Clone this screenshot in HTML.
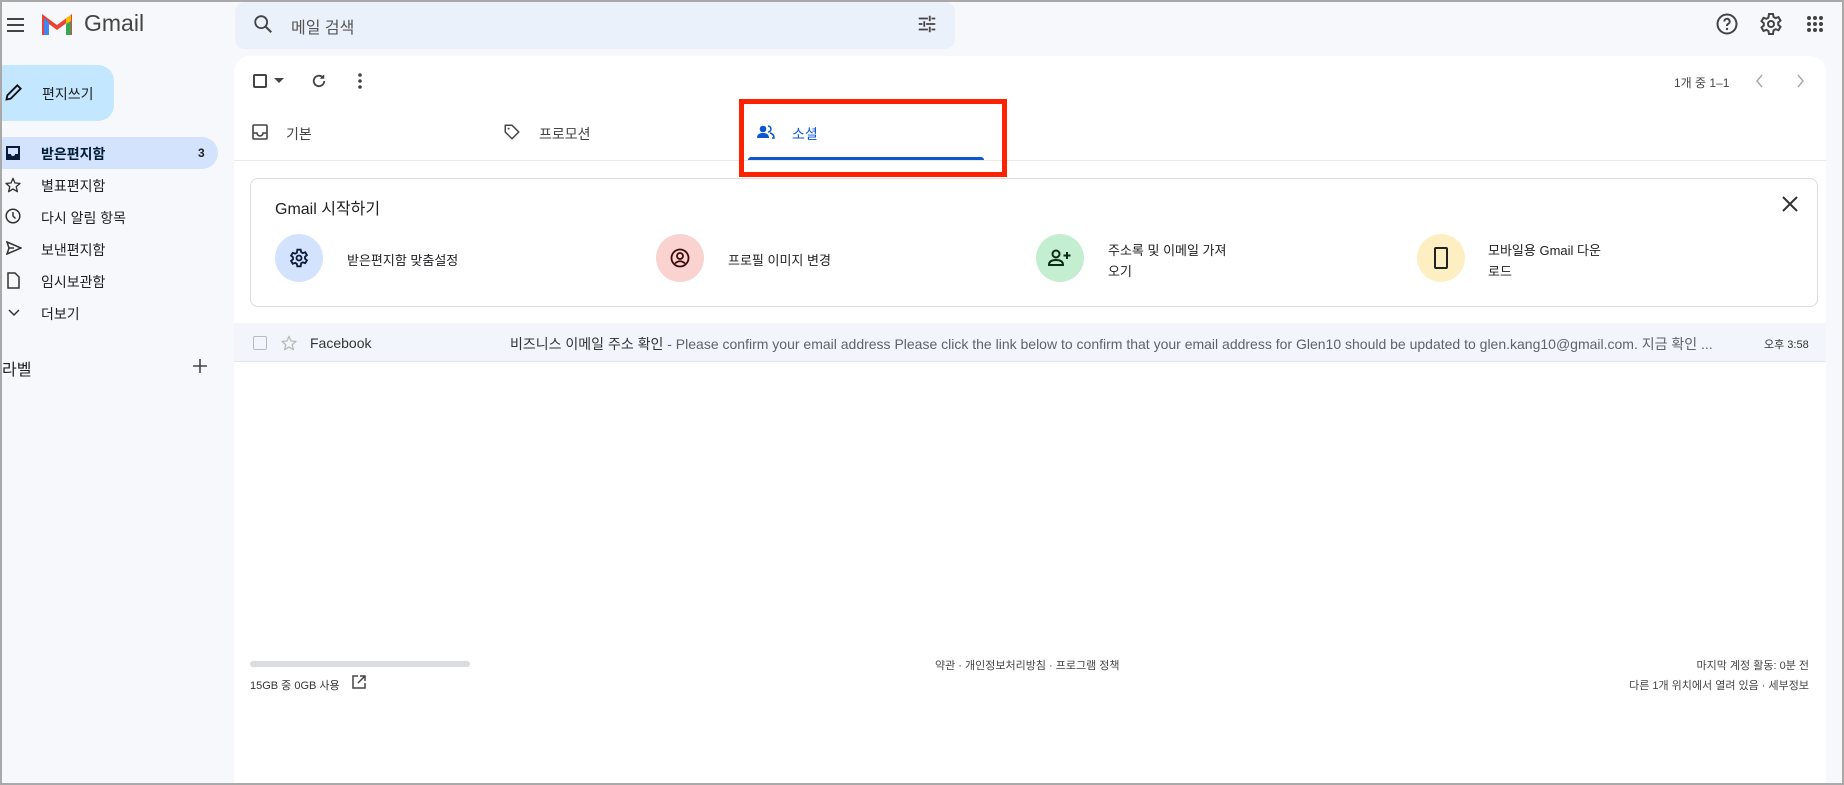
<!DOCTYPE html>
<html><head><meta charset="utf-8"><style>
*{box-sizing:border-box;margin:0;padding:0}
html,body{width:1844px;height:785px;overflow:hidden}
body{background:#f6f8fc;font-family:"Liberation Sans","Noto Sans CJK KR",sans-serif;color:#202124;position:relative}
.a{position:absolute}
.t{position:absolute;white-space:nowrap}
svg{position:absolute}
.nav{font-size:14px;color:#202124}
</style></head><body>
<!-- header -->
<svg style="left:6px;top:17px" width="20" height="16" viewBox="0 0 20 16"><path d="M1 2h17M1 8h17M1 14h17" stroke="#444" stroke-width="2"/></svg>
<svg style="left:42px;top:13px" width="31" height="24" viewBox="0 0 31 24"><path d="M2 22V5l13 9.5L28 5v17" fill="none" stroke="#ea4335" stroke-width="4"/><path d="M2 5v17h5V9z" fill="#4285f4"/><path d="M29 5v17h-5V9z" fill="#34a853"/><path d="M24 5l5-3v6l-5 3z" fill="#fbbc04"/></svg>
<div class="t" style="left:84px;top:10px;font-size:23px;color:#444">Gmail</div>
<div class="a" style="left:235px;top:2px;width:720px;height:47px;background:#eaf1fb;border-radius:10px"></div>
<svg style="left:252px;top:13px" width="22" height="22" viewBox="0 0 24 24"><circle cx="10" cy="10" r="6.5" fill="none" stroke="#444" stroke-width="2"/><path d="M15 15l6 6" stroke="#444" stroke-width="2.2"/></svg>
<div class="t" style="left:291px;top:14px;font-size:16px;color:#555">메일 검색</div>
<svg style="left:916px;top:13px" width="22" height="22" viewBox="0 0 24 24"><path d="M3 6h10M17 6h4M15 3v6M3 12h4M11 12h10M9 9v6M3 18h10M17 18h4M15 15v6" stroke="#444" stroke-width="2"/></svg>
<svg style="left:1715px;top:12px" width="24" height="24" viewBox="0 0 24 24"><circle cx="12" cy="12" r="9.5" fill="none" stroke="#444" stroke-width="2"/><path d="M9.3 9.5a2.7 2.7 0 1 1 3.7 2.5c-.8.4-1 1-1 2" fill="none" stroke="#444" stroke-width="2"/><circle cx="12" cy="17" r="1.2" fill="#444"/></svg>
<svg style="left:1759px;top:12px" width="24" height="24" viewBox="0 0 24 24"><path d="M10 2h4l.6 3 2 1.1 2.9-1 2 3.4-2.3 2v2.3l2.3 2-2 3.4-2.9-1-2 1.1L14 22h-4l-.6-3-2-1.1-2.9 1-2-3.4 2.3-2v-2.3l-2.3-2 2-3.4 2.9 1 2-1.1z" fill="none" stroke="#444" stroke-width="2"/><circle cx="12" cy="12" r="3" fill="none" stroke="#444" stroke-width="2"/></svg>
<svg style="left:1806px;top:15px" width="18" height="18" viewBox="0 0 18 18" fill="#444"><circle cx="3" cy="3" r="2"/><circle cx="9" cy="3" r="2"/><circle cx="15" cy="3" r="2"/><circle cx="3" cy="9" r="2"/><circle cx="9" cy="9" r="2"/><circle cx="15" cy="9" r="2"/><circle cx="3" cy="15" r="2"/><circle cx="9" cy="15" r="2"/><circle cx="15" cy="15" r="2"/></svg>
<!-- sidebar -->
<div class="a" style="left:0;top:65px;width:114px;height:56px;background:#c2e7ff;border-radius:0 16px 16px 0"></div>
<svg style="left:4px;top:82px" width="20" height="20" viewBox="0 0 24 24"><path d="M3 21l1-5L16 4l4 4L8 20z" fill="none" stroke="#111" stroke-width="2.2"/></svg>
<div class="t nav" style="left:42px;top:84px">편지쓰기</div>
<div class="a" style="left:0;top:137px;width:218px;height:32px;background:#d3e3fd;border-radius:0 16px 16px 0"></div>
<svg style="left:5px;top:145px" width="16" height="16" viewBox="0 0 16 16"><rect x="1" y="1" width="14" height="14" fill="#0b1b3b"/><path d="M3 3h10v6h-3a2 2 0 0 1-4 0H3z" fill="#d3e3fd"/></svg>
<div class="t nav" style="left:41px;top:144px;font-weight:bold;color:#001d35">받은편지함</div>
<div class="t nav" style="left:198px;top:146px;font-weight:bold;font-size:12px">3</div>
<svg style="left:5px;top:177px" width="16" height="16" viewBox="0 0 24 24"><path d="M12 2l3 7 7.5.6-5.7 5 1.8 7.4L12 18l-6.6 4 1.8-7.4-5.7-5L9 9z" fill="none" stroke="#333" stroke-width="2" stroke-linejoin="round"/></svg>
<div class="t nav" style="left:41px;top:176px">별표편지함</div>
<svg style="left:5px;top:208px" width="16" height="16" viewBox="0 0 16 16"><circle cx="8" cy="8" r="6.8" fill="none" stroke="#333" stroke-width="1.5"/><path d="M8 4v4l2.5 2.5" fill="none" stroke="#333" stroke-width="1.5"/></svg>
<div class="t nav" style="left:41px;top:208px">다시 알림 항목</div>
<svg style="left:6px;top:241px" width="16" height="14" viewBox="0 0 16 14"><path d="M1 1l14 6-14 6 2-6z M3 7h5" fill="none" stroke="#333" stroke-width="1.5"/></svg>
<div class="t nav" style="left:41px;top:240px">보낸편지함</div>
<svg style="left:7px;top:272px" width="13" height="17" viewBox="0 0 13 17"><path d="M1 1h7l4 4v11H1z" fill="none" stroke="#333" stroke-width="1.5"/></svg>
<div class="t nav" style="left:41px;top:272px">임시보관함</div>
<svg style="left:8px;top:309px" width="12" height="8" viewBox="0 0 12 8"><path d="M1 1l5 5 5-5" fill="none" stroke="#333" stroke-width="1.5"/></svg>
<div class="t nav" style="left:41px;top:304px">더보기</div>
<div class="t" style="left:2px;top:356px;font-size:16px">라벨</div>
<svg style="left:193px;top:359px" width="14" height="14"><path d="M7 0v14M0 7h14" stroke="#444" stroke-width="1.6"/></svg>
<!-- main panel -->
<div class="a" style="left:234px;top:56px;width:1592px;height:727px;background:#fff;border-radius:16px 16px 0 0"></div>
<div class="a" style="left:253px;top:74px;width:14px;height:14px;border:2px solid #444;border-radius:2px"></div>
<svg style="left:274px;top:78px" width="10" height="6"><path d="M0 0h10L5 5z" fill="#444"/></svg>
<svg style="left:310px;top:72px" width="18" height="18" viewBox="0 0 24 24"><path d="M19 12a7 7 0 1 1-2-5" fill="none" stroke="#444" stroke-width="2.4"/><path d="M19 3v6h-6z" fill="#444"/></svg>
<svg style="left:357px;top:72px" width="6" height="18"><circle cx="3" cy="3" r="1.8" fill="#444"/><circle cx="3" cy="9" r="1.8" fill="#444"/><circle cx="3" cy="15" r="1.8" fill="#444"/></svg>
<div class="t" style="left:1674px;top:74px;font-size:12px;color:#444">1개 중 1–1</div>
<svg style="left:1755px;top:74px" width="10" height="14"><path d="M7 1L2 7l5 6" fill="none" stroke="#aaa" stroke-width="1.5"/></svg>
<svg style="left:1795px;top:74px" width="10" height="14"><path d="M3 1l5 6-5 6" fill="none" stroke="#aaa" stroke-width="1.5"/></svg>
<!-- tabs -->
<svg style="left:252px;top:124px" width="16" height="16" viewBox="0 0 16 16"><rect x="1" y="1" width="14" height="14" rx="1" fill="none" stroke="#444" stroke-width="1.6"/><path d="M1 9h4a3 3 0 0 0 6 0h4" fill="none" stroke="#444" stroke-width="1.6"/></svg>
<div class="t" style="left:286px;top:124px;font-size:14px;color:#444">기본</div>
<svg style="left:503px;top:123px" width="18" height="18" viewBox="0 0 24 24"><path d="M3 3h9l9 9-9 9-9-9z" fill="none" stroke="#444" stroke-width="2" stroke-linejoin="round"/><circle cx="7.5" cy="7.5" r="1.3" fill="#444"/></svg>
<div class="t" style="left:539px;top:124px;font-size:14px;color:#444">프로모션</div>
<svg style="left:757px;top:125px" width="18" height="14" viewBox="0 0 18 14"><circle cx="6" cy="4" r="3.3" fill="#0b57d0"/><path d="M0 13c0-4 3-5 6-5s6 1 6 5z" fill="#0b57d0"/><path d="M11 1a3 3 0 0 1 0 6M13 8c2 .5 4 1.5 4 5h-2" fill="none" stroke="#0b57d0" stroke-width="1.5"/></svg>
<div class="t" style="left:792px;top:124px;font-size:14px;color:#0b57d0">소셜</div>
<div class="a" style="left:748px;top:157px;width:236px;height:3px;background:#0b57d0;border-radius:3px 3px 0 0"></div>
<div class="a" style="left:234px;top:160px;width:1592px;height:1px;background:#eaeaea"></div>
<div class="a" style="left:739px;top:99px;width:268px;height:78px;border:5px solid #ff2200"></div>
<!-- card -->
<div class="a" style="left:250px;top:178px;width:1568px;height:129px;border:1px solid #dadce0;border-radius:8px"></div>
<div class="t" style="left:275px;top:195px;font-size:16px;color:#202124">Gmail 시작하기</div>
<svg style="left:1782px;top:196px" width="16" height="16"><path d="M1 1l14 14M15 1L1 15" stroke="#333" stroke-width="2"/></svg>
<div class="a" style="left:275px;top:234px;width:48px;height:48px;border-radius:50%;background:#d3e3fd"></div>
<svg style="left:289px;top:248px" width="20" height="20" viewBox="0 0 24 24"><path d="M10 2h4l.6 3 2 1.1 2.9-1 2 3.4-2.3 2v2.3l2.3 2-2 3.4-2.9-1-2 1.1L14 22h-4l-.6-3-2-1.1-2.9 1-2-3.4 2.3-2v-2.3l-2.3-2 2-3.4 2.9 1 2-1.1z" fill="none" stroke="#0b1b3b" stroke-width="2.2"/><circle cx="12" cy="12" r="3" fill="none" stroke="#0b1b3b" stroke-width="2.2"/></svg>
<div class="t" style="left:347px;top:250px;font-size:13px">받은편지함 맞춤설정</div>
<div class="a" style="left:656px;top:234px;width:48px;height:48px;border-radius:50%;background:#fad2cf"></div>
<svg style="left:670px;top:248px" width="20" height="20" viewBox="0 0 20 20"><circle cx="10" cy="10" r="8.5" fill="none" stroke="#3b0b0b" stroke-width="1.8"/><circle cx="10" cy="8" r="3" fill="none" stroke="#3b0b0b" stroke-width="1.8"/><path d="M5 15.5c3-3 7-3 10 0" fill="none" stroke="#3b0b0b" stroke-width="1.8"/></svg>
<div class="t" style="left:728px;top:250px;font-size:13px">프로필 이미지 변경</div>
<div class="a" style="left:1036px;top:234px;width:48px;height:48px;border-radius:50%;background:#c4eed0"></div>
<svg style="left:1048px;top:249px" width="24" height="18" viewBox="0 0 24 18"><circle cx="8" cy="5" r="3.5" fill="none" stroke="#0b2b14" stroke-width="2"/><path d="M1 16c0-4 3-5 7-5s7 1 7 5z" fill="none" stroke="#0b2b14" stroke-width="2"/><path d="M19 3v7M15.5 6.5h7" stroke="#0b2b14" stroke-width="2"/></svg>
<div class="t" style="left:1108px;top:240px;font-size:13px;line-height:21px">주소록 및 이메일 가져<br>오기</div>
<div class="a" style="left:1417px;top:234px;width:48px;height:48px;border-radius:50%;background:#feefc3"></div>
<div class="a" style="left:1434px;top:247px;width:14px;height:22px;border:2px solid #222;border-radius:2px"></div>
<div class="t" style="left:1488px;top:240px;font-size:13px;line-height:21px">모바일용 Gmail 다운<br>로드</div>
<!-- email row -->
<div class="a" style="left:234px;top:323px;width:1592px;height:39px;background:#f2f6fc;border-bottom:1px solid #e3e6ea"></div>
<div class="a" style="left:253px;top:336px;width:14px;height:14px;border:1.5px solid #bbb;border-radius:2px"></div>
<svg style="left:281px;top:335px" width="16" height="16" viewBox="0 0 24 24"><path d="M12 2l3 7 7.5.6-5.7 5 1.8 7.4L12 18l-6.6 4 1.8-7.4-5.7-5L9 9z" fill="none" stroke="#bbb" stroke-width="2" stroke-linejoin="round"/></svg>
<div class="t" style="left:310px;top:335px;font-size:14px;color:#333">Facebook</div>
<div class="t" style="left:510px;top:334px;font-size:14px;color:#5f6368;width:1206px;overflow:hidden"><span style="color:#333">비즈니스 이메일 주소 확인</span> - Please confirm your email address Please click the link below to confirm that your email address for Glen10 should be updated to glen.kang10@gmail.com. 지금 확인 ...</div>
<div class="t" style="left:1764px;top:336px;font-size:11px;color:#333">오후 3:58</div>
<!-- footer -->
<div class="a" style="left:250px;top:661px;width:220px;height:6px;background:#dadce0;border-radius:3px"></div>
<div class="t" style="left:250px;top:677px;font-size:11px;color:#333">15GB 중 0GB 사용</div>
<svg style="left:352px;top:675px" width="14" height="14" viewBox="0 0 14 14"><path d="M6 1H1v12h12V8M8 1h5v5M13 1L6 8" fill="none" stroke="#444" stroke-width="1.5"/></svg>
<div class="t" style="left:935px;top:657px;font-size:11px;color:#444">약관 · 개인정보처리방침 · 프로그램 정책</div>
<div class="t" style="right:35px;top:657px;font-size:11px;color:#444">마지막 계정 활동: 0분 전</div>
<div class="t" style="right:35px;top:677px;font-size:11px;color:#444">다른 1개 위치에서 열려 있음 · 세부정보</div>
<div class="a" style="left:0;top:0;width:1844px;height:785px;border:2px solid #a9a9a9;pointer-events:none"></div>
</body></html>
